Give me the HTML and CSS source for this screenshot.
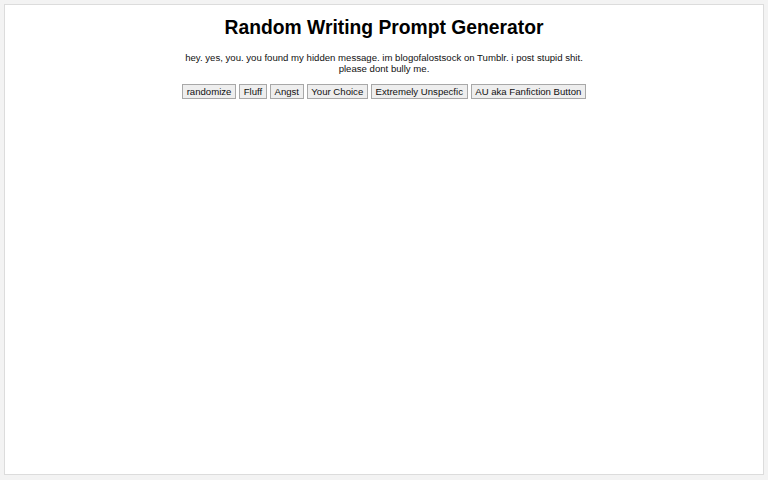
FILE: index.html
```html
<!DOCTYPE html>
<html>
<head>
<meta charset="utf-8">
<link rel="stylesheet" href="styles.css">
</head>
<body>
<div class="page">
  <h1 class="title">Random Writing Prompt Generator</h1>
  <p class="note">hey. yes, you. you found my hidden message. im blogofalostsock on Tumblr. i post stupid shit.<br>please dont bully me.</p>
  <div class="buttons">
    <button class="btn">randomize</button>
    <button class="btn">Fluff</button>
    <button class="btn">Angst</button>
    <button class="btn">Your Choice</button>
    <button class="btn">Extremely Unspecfic</button>
    <button class="btn">AU aka Fanfiction Button</button>
  </div>
</div>
</body>
</html>
```
FILE: styles.css
```css
html, body {
  margin: 0;
  padding: 0;
  background: #f3f3f3;
  font-family: "Liberation Sans", Arial, sans-serif;
}
body {
  padding: 4px;
}
.page {
  box-sizing: border-box;
  height: 471px;
  background: #fff;
  border: 1px solid #dcdcdc;
  text-align: center;
  padding-top: 12px;
}
.title {
  margin: 0;
  font-size: 19.3px;
  font-weight: bold;
  color: #000;
  line-height: 22px;
}
.note {
  margin: 13px 0 0;
  font-size: 9.6px;
  line-height: 11px;
  color: #111;
}
.buttons {
  margin-top: 10px;
  display: flex;
  justify-content: center;
  gap: 3px;
}
.btn {
  font-family: "Liberation Sans", Arial, sans-serif;
  font-size: 9.6px;
  line-height: 11px;
  padding: 1px 3.65px;
  background: #eeeeee;
  border: 1px solid #a8a8a8;
  border-radius: 0;
  color: #111;
}
```
